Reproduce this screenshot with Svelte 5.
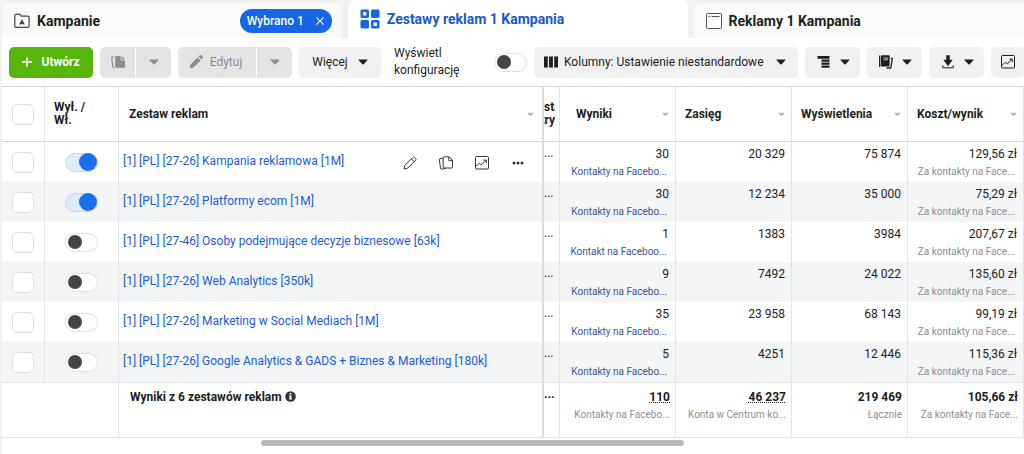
<script lang="ts">
  type Metric = { value: string; note?: string };

  let showSetup = $state(false);

  const rows = $state([
    { name: '[1] [PL] [27-26] Kampania reklamowa [1M]', on: true, tools: true, results: '30', kind: 'Kontakty na Facebo...', reach: '20 329', views: '75 874', cost: '129,56 zł' },
    { name: '[1] [PL] [27-26] Platformy ecom [1M]', on: true, tools: false, results: '30', kind: 'Kontakty na Facebo...', reach: '12 234', views: '35 000', cost: '75,29 zł' },
    { name: '[1] [PL] [27-46] Osoby podejmujące decyzje biznesowe [63k]', on: false, tools: false, results: '1', kind: 'Kontakt na Faceboo...', reach: '1383', views: '3984', cost: '207,67 zł' },
    { name: '[1] [PL] [27-26] Web Analytics [350k]', on: false, tools: false, results: '9', kind: 'Kontakty na Facebo...', reach: '7492', views: '24 022', cost: '135,60 zł' },
    { name: '[1] [PL] [27-26] Marketing w Social Mediach [1M]', on: false, tools: false, results: '35', kind: 'Kontakty na Facebo...', reach: '23 958', views: '68 143', cost: '99,19 zł' },
    { name: '[1] [PL] [27-26] Google Analytics & GADS + Biznes & Marketing [180k]', on: false, tools: false, results: '5', kind: 'Kontakty na Facebo...', reach: '4251', views: '12 446', cost: '115,36 zł' }
  ]);

  const metricColumns = ['Wyniki', 'Zasięg', 'Wyświetlenia', 'Koszt/wynik'];

  const totals: (Metric & { dotted?: boolean })[] = [
    { value: '110', note: 'Kontakty na Facebo...', dotted: true },
    { value: '46 237', note: 'Konta w Centrum ko...', dotted: true },
    { value: '219 469', note: 'Łącznie' },
    { value: '105,66 zł', note: 'Za kontakty na Face...' }
  ];
</script>

{#snippet caret()}
  <svg class="caret" viewBox="0 0 10 6" aria-hidden="true"><path d="M1.2.6h7.6c.6 0 .8.6.4 1L5.6 5.2a.8.8 0 0 1-1.2 0L.8 1.6C.4 1.2.6.6 1.2.6z" fill="currentColor" /></svg>
{/snippet}

{#snippet chart()}
  <svg class="icon" viewBox="0 0 16 16" fill="none" stroke="currentColor" aria-hidden="true">
    <rect x="1.5" y="1.5" width="13" height="12.5" rx="1" />
    <path d="M2 11.5l3.300-3.300 2 1.600 4.700-4.400M9.300 5.100h3v3" />
  </svg>
{/snippet}

<div class="page">
  <nav class="tabs" aria-label="Poziomy">
    <div class="tab">
      <svg class="icon" viewBox="0 0 16 16" fill="none" stroke="#444" stroke-width="1.2" aria-hidden="true">
        <path d="M.8 13V2.600c0-.8.5-1.300 1.300-1.300h3.400c.5 0 .9.300 1.100.7l.6 1.100h6.600c.8 0 1.300.5 1.300 1.300V13c0 .8-.5 1.300-1.300 1.300H2.100c-.8 0-1.300-.5-1.300-1.300z" />
        <path d="M8 6.300l2.800 5.200H9.300L8 10.400l-1.300 1.100H5.200z" fill="#333" stroke="none" />
      </svg>
      <a href="#kampanie">Kampanie</a>
      <button class="selected">Wybrano 1
        <svg viewBox="0 0 8 8" aria-hidden="true"><path d="M.4.4l7.200 7.200M7.600.4L.4 7.600" stroke="#fff" stroke-width="1.100" /></svg>
      </button>
    </div>
    <div class="tab active">
      <svg class="grid-icon" viewBox="0 0 20 20" fill="#1766e8" aria-hidden="true">
        <path fill-rule="evenodd" d="M2 .5h5.500A1.500 1.500 0 0 1 9 2v5.500A1.500 1.500 0 0 1 7.500 9H2A1.500 1.500 0 0 1 .5 7.500V2A1.500 1.500 0 0 1 2 .5zM3.100 3.100v3.300h3.300V3.100z" />
        <rect x="11" y=".5" width="8.500" height="8.500" rx="1.500" />
        <rect x=".5" y="11" width="8.500" height="8.500" rx="1.500" />
        <path fill-rule="evenodd" d="M12.500 11H18a1.500 1.500 0 0 1 1.500 1.500V18a1.500 1.500 0 0 1-1.500 1.500h-5.500A1.500 1.500 0 0 1 11 18v-5.500a1.500 1.500 0 0 1 1.500-1.500zM13.600 13.600V16.900h3.300v-3.300z" />
      </svg>
      <a href="#zestawy">Zestawy reklam 1 Kampania</a>
    </div>
    <div class="tab last">
      <svg class="icon" viewBox="0 0 16 16" fill="none" stroke="#555" aria-hidden="true">
        <rect x=".5" y=".5" width="15" height="15" rx="1.200" />
        <path d="M2.500 3.500h1.600M5.500 3.500h8" />
      </svg>
      <a href="#reklamy">Reklamy 1 Kampania</a>
    </div>
  </nav>

  <div class="toolbar">
    <button class="create">
      <svg viewBox="0 0 10 10" aria-hidden="true"><path d="M5 0v10M0 5h10" stroke="#fff" stroke-width="1.400" /></svg>
      Utwórz
    </button>
    <div class="pair">
      <button class="muted" aria-label="Duplikuj">
        <svg class="icon" viewBox="0 0 16 16" aria-hidden="true">
          <path d="M6.500 2h4.200v3.600c0 .6.400 1 1 1H15v5.900c0 .8-.5 1.300-1.300 1.300H6.500c-.8 0-1.300-.5-1.300-1.300V3.300C5.200 2.500 5.700 2 6.500 2z" fill="currentColor" />
          <path d="M11.600 2L15 5.600h-3.400z" fill="currentColor" />
          <path d="M4 2.800l-1.700.3c-.5.1-.7.400-.6.900l1.200 8.900c.1.500.4.800.9.800h.4" fill="none" stroke="currentColor" stroke-width="1.200" />
        </svg>
      </button>
      <button class="muted" aria-label="Opcje duplikowania">{@render caret()}</button>
    </div>
    <div class="pair">
      <button class="muted edit">
        <svg class="icon" viewBox="0 0 16 16" fill="currentColor" aria-hidden="true"><path d="M1.500 14.500l1-4L9.600 3.400l3 3-7.100 7.100zM10.500 2.500l1-1c.6-.6 1.300-.6 1.900 0l1.100 1.100c.6.600.6 1.300 0 1.900l-1 1z" /></svg>
        Edytuj
      </button>
      <button class="muted" aria-label="Opcje edycji">{@render caret()}</button>
    </div>
    <button class="more">Więcej {@render caret()}</button>
    <label class="setup">
      <span>Wyświetl konfigurację</span>
      <input type="checkbox" role="switch" class="switch" bind:checked={showSetup} />
    </label>
    <button class="columns">
      <svg class="icon" viewBox="0 0 16 16" fill="currentColor" aria-hidden="true"><path d="M1 2.500h3.800v11H1zM6.100 2.500h3.800v11H6.100zM11.200 2.500H15v11h-3.800z" /></svg>
      <span>Kolumny: Ustawienie niestandardowe</span>
      {@render caret()}
    </button>
    <button class="tool" aria-label="Podział">
      <svg class="icon" viewBox="0 0 16 16" fill="currentColor" aria-hidden="true"><path d="M1.500 2h12v2.800h-12zM5.500 5.500h8v2.300h-8zM5.500 8.500h8v2.300h-8zM5.500 11.500h8v2.300h-8z" /></svg>
      {@render caret()}
    </button>
    <button class="tool" aria-label="Raporty">
      <svg class="icon" viewBox="0 0 16 16" aria-hidden="true">
        <path d="M1.700 1.500v11.500" stroke="currentColor" stroke-width="1.300" />
        <rect x="3" y="1.200" width="8.600" height="11.400" rx="1" fill="currentColor" />
        <path d="M5.500 4h4.500M5.500 5.800h4.500" stroke="#f1f1f1" stroke-width=".8" />
        <path d="M12.700 4.200l1.600.5-1.400 8.600c-.1.500-.4.700-.9.700H8.500" fill="none" stroke="currentColor" stroke-width="1.300" />
      </svg>
      {@render caret()}
    </button>
    <button class="tool" aria-label="Eksportuj">
      <svg class="icon" viewBox="0 0 16 16" aria-hidden="true">
        <path d="M6.600 1.500h2.800V6h2.800L8 11.800 3.800 6h2.800z" fill="currentColor" stroke="currentColor" stroke-width=".6" stroke-linejoin="round" />
        <path d="M2.800 11.300v2.500h10.400v-2.500" fill="none" stroke="currentColor" />
      </svg>
      {@render caret()}
    </button>
    <button class="tool last" aria-label="Wykresy">{@render chart()}</button>
  </div>

  <table>
    <colgroup>
      <col class="c-check" /><col class="c-switch" /><col class="c-name" /><col class="c-cut" />
      <col class="c-metric" /><col class="c-metric" /><col class="c-metric" /><col class="c-metric" />
    </colgroup>
    <thead>
      <tr>
        <th><input type="checkbox" class="box" aria-label="Zaznacz wszystkie" /></th>
        <th class="state">Wył. / Wł.</th>
        <th class="name"><div class="head">Zestaw reklam {@render caret()}</div></th>
        <th class="cut"><div class="clip"><span>sta</span><span>try</span></div></th>
        {#each metricColumns as title}
          <th><div class="head">{title} {@render caret()}</div></th>
        {/each}
      </tr>
    </thead>
    <tbody>
      {#each rows as row}
        <tr>
          <td><input type="checkbox" class="box" aria-label={row.name} /></td>
          <td class="toggle"><input type="checkbox" role="switch" class="switch" aria-label={row.name} bind:checked={row.on} /></td>
          <td class="name">
            <div class="title">
              <a href="#zestaw">{row.name}</a>
              {#if row.tools}
                <div class="actions">
                  <button aria-label="Edytuj">
                    <svg class="icon" viewBox="0 0 16 16" fill="none" stroke="currentColor" aria-hidden="true"><path d="M2 14l.8-3.600 8-8c.5-.5 1-.5 1.500 0l1.300 1.300c.5.5.5 1 0 1.500l-8 8zM9.300 3.900l2.800 2.800" /></svg>
                  </button>
                  <button aria-label="Duplikuj">
                    <svg class="icon" viewBox="0 0 16 16" fill="none" stroke="currentColor" aria-hidden="true"><path d="M5.200 3v9c0 .6.400 1 1 1h7.300c.6 0 1-.4 1-1V5.300l-3.300-3.500h-5c-.6 0-1 .5-1 1.200zM10.800 2v3.700h3.600M5 3.200l-3 .4c-.5.1-.7.500-.6 1l1.100 8.900c.1.500.5.700 1 .6l4.500-.8" /></svg>
                  </button>
                  <button aria-label="Wykresy">{@render chart()}</button>
                  <button aria-label="Więcej">
                    <svg class="icon" viewBox="0 0 16 16" fill="currentColor" aria-hidden="true"><circle cx="4" cy="8" r="1.500" /><circle cx="8" cy="8" r="1.500" /><circle cx="12" cy="8" r="1.500" /></svg>
                  </button>
                </div>
              {/if}
            </div>
          </td>
          <td class="cut">...</td>
          <td class="metric"><b>{row.results}</b><a href="#wyniki">{row.kind}</a></td>
          <td class="metric"><b>{row.reach}</b></td>
          <td class="metric"><b>{row.views}</b></td>
          <td class="metric"><b>{row.cost}</b><small>Za kontakty na Face...</small></td>
        </tr>
      {/each}
    </tbody>
    <tfoot>
      <tr>
        <td colspan="2"></td>
        <td class="name">
          Wyniki z 6 zestawów reklam
          <svg class="info" viewBox="0 0 12 12" aria-hidden="true"><circle cx="6" cy="6" r="5.800" fill="#333" /><path d="M5 2.300h2v1.600H5zM4.500 4.900H7v3.300h.7v1.200H4.300V8.200H5V6h-.5z" fill="#fff" /></svg>
        </td>
        <td class="cut">...</td>
        {#each totals as total}
          <td class="metric"><b class:dotted={total.dotted}>{total.value}</b><small>{total.note}</small></td>
        {/each}
      </tr>
    </tfoot>
  </table>
  <div class="scroll"><div class="thumb"></div></div>
</div>

<style>
  :global(body) {
    margin: 0;
    background: #fff;
  }
  .page {
    border-left: 2px solid #f1f1f1;
    font: 12px/16px Roboto, "Liberation Sans", sans-serif;
    color: #1c1e21;
    overflow: hidden;
  }
  button,
  input {
    margin: 0;
    font: inherit;
    color: inherit;
  }
  button {
    display: flex;
    align-items: center;
    justify-content: center;
    border: 0;
    padding: 0;
    background: none;
    white-space: nowrap;
  }
  svg {
    flex: none;
  }
  a {
    color: inherit;
    text-decoration: none;
  }
  .icon {
    width: 16px;
    height: 16px;
  }
  .caret {
    width: 10px;
    height: 6px;
  }

  .tabs {
    display: flex;
    align-items: flex-end;
    gap: 6px;
    background: #f1f1f1;
  }
  .tab {
    flex: 34 0 0;
    display: flex;
    align-items: center;
    gap: 7px;
    box-sizing: border-box;
    height: 35px;
    padding: 0 10px 0 12px;
    border-radius: 6px 6px 0 0;
    background: #fafafa;
    font-size: 14px;
    font-weight: 700;
  }
  .tab.last {
    flex-grow: 33;
    border-top-right-radius: 0;
  }
  .tab.active {
    height: 38px;
    background: #fff;
    color: #1559cf;
  }
  .grid-icon {
    width: 20px;
    height: 20px;
  }
  .selected {
    gap: 12px;
    height: 24px;
    margin-left: auto;
    padding: 0 8px 0 7px;
    border-radius: 12px;
    background: #1766e8;
    color: #fff;
    font-size: 12px;
    font-weight: 500;
  }
  .selected svg {
    width: 8px;
    height: 8px;
  }

  .toolbar {
    display: flex;
    align-items: center;
    gap: 7px;
    height: 48px;
    padding-left: 7px;
  }
  .toolbar button {
    flex: none;
    height: 31px;
    border-radius: 5px;
    background: #f1f1f1;
  }
  .toolbar .create {
    gap: 9px;
    width: 84px;
    background: #58b50c;
    color: #fff;
    font-weight: 700;
  }
  .create svg {
    width: 10px;
    height: 10px;
  }
  .pair {
    display: flex;
    gap: 1px;
  }
  .pair .muted {
    width: 35px;
    background: #e4e4e4;
    color: #8c8c8c;
  }
  .pair .muted:first-child {
    border-radius: 5px 0 0 5px;
  }
  .pair .muted:last-child {
    border-radius: 0 5px 5px 0;
  }
  .pair .edit {
    gap: 6px;
    width: 78px;
    padding-right: 4px;
  }
  .toolbar .more {
    gap: 10px;
    width: 82px;
  }
  .setup {
    display: flex;
    flex: none;
    align-items: center;
    gap: 12px;
    margin-left: 6px;
  }
  .setup span {
    width: 88px;
    line-height: 17px;
  }
  .toolbar .columns {
    gap: 5px;
    width: 264px;
    padding: 0 12px 0 9px;
  }
  .columns .caret {
    margin-left: auto;
  }
  .toolbar .tool {
    gap: 8px;
    width: 55px;
  }
  .toolbar .tool.last {
    width: 34px;
  }
  .switch {
    appearance: none;
    display: flex;
    align-items: center;
    box-sizing: border-box;
    width: 33px;
    height: 19px;
    padding: 0 2px;
    border: 1px solid #dfe1e4;
    border-radius: 10px;
    background: #fff;
  }
  .switch::before {
    content: "";
    width: 14px;
    height: 14px;
    border-radius: 50%;
    background: #444;
  }
  .switch:checked {
    justify-content: flex-end;
    padding: 0;
    border-color: #c9d6e6;
    background: #e0ebf9;
  }
  .switch:checked::before {
    width: 18px;
    height: 18px;
    background: #1a6ef0;
  }
  .box {
    appearance: none;
    display: block;
    box-sizing: border-box;
    width: 22px;
    height: 21px;
    margin: 0 auto;
    border: 1px solid #dddfe2;
    border-radius: 5px;
    background: #fff;
  }

  table {
    width: 100%;
    table-layout: fixed;
    border-collapse: separate;
    border-spacing: 0;
  }
  .c-check {
    width: 43px;
  }
  .c-switch {
    width: 74px;
  }
  .c-cut {
    width: 16px;
  }
  .c-metric {
    width: 116px;
  }
  th,
  td {
    box-sizing: border-box;
    padding: 0;
    border-right: 1px solid #e1e3e6;
    text-align: left;
  }
  th {
    height: 56px;
    border-top: 1px solid #d6d6d6;
    border-bottom: 1px solid #d6d6d6;
    font-size: 12px;
    line-height: 13px;
  }
  .state {
    padding: 0 30px 0 9px;
  }
  .head {
    display: flex;
    align-items: center;
    justify-content: space-between;
    padding: 0 6px 0 9px;
  }
  th:nth-child(5) .head {
    padding-left: 16px;
  }
  .head .caret {
    width: 7px;
    height: 5px;
    color: #b5bac1;
  }
  .name {
    padding-left: 4px;
    border-right: 2px solid #dcdcdc;
  }
  th.name .head {
    padding: 0 8px 0 6px;
  }
  .clip {
    display: flex;
    flex-direction: column;
    width: 11px;
    overflow: hidden;
  }
  .clip span:last-child {
    align-self: flex-end;
  }
  tbody td {
    height: 40px;
  }
  tbody tr:nth-child(even) td {
    background: #f3f4f6;
  }
  .toggle {
    padding-left: 20px;
  }
  .title {
    display: flex;
    align-items: center;
    justify-content: space-between;
    padding-bottom: 2px;
    color: #1d5bd0;
    white-space: nowrap;
  }
  .actions {
    display: flex;
    gap: 20px;
    padding: 4px 16px 0 0;
    color: #333;
  }
  td.cut {
    padding-top: 3px;
    vertical-align: top;
  }
  .metric {
    padding: 3px 6px 0 6px;
    text-align: right;
    vertical-align: top;
  }
  .metric b,
  .metric a,
  .metric small {
    display: block;
    line-height: 18px;
    white-space: nowrap;
  }
  .metric b {
    font-size: 12px;
    font-weight: 400;
  }
  .metric a,
  .metric small {
    padding-right: 2px;
    font-size: 10px;
  }
  .metric a {
    color: #385898;
  }
  .metric small {
    color: #8d8f92;
  }
  tfoot td {
    height: 56px;
    padding-top: 6px;
    border-top: 1px solid #e1e3e6;
    border-bottom: 1px solid #e1e3e6;
    font-weight: 700;
    vertical-align: top;
  }
  tfoot .name {
    padding-left: 11px;
  }
  tfoot .metric {
    padding: 5px 5px 0 6px;
  }
  tfoot .metric b {
    font-weight: 700;
  }
  tfoot .metric small {
    padding-right: 0;
    font-weight: 400;
  }
  tfoot .metric .dotted {
    text-decoration: underline dotted;
  }
  .info {
    width: 11px;
    height: 11px;
    vertical-align: -1px;
  }
  .scroll {
    padding: 2px 340px 8px 259px;
  }
  .thumb {
    height: 6px;
    border-radius: 3px;
    background: #b8b8b8;
  }
</style>
